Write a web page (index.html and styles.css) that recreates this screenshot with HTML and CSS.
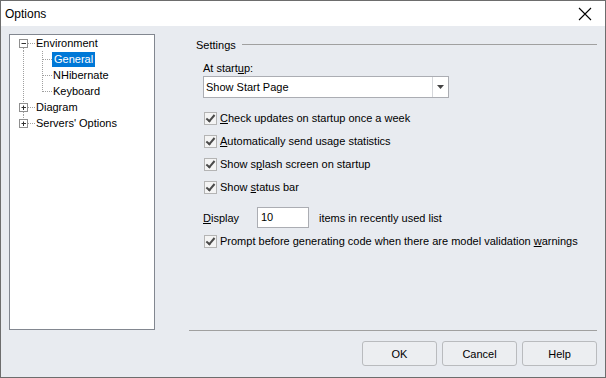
FILE: index.html
```html
<html>

<head>
    <meta charset="utf-8">
    <title>Options</title>
    <link rel="stylesheet" href="styles.css">
</head>

<body>
    <div class="window">
        <div class="title-bar">
            <span class="title">Options</span>
            <svg class="close" width="14" height="14" viewBox="0 0 14 14">
                <path d="M1 1L13 13M13 1L1 13" stroke="#000" stroke-width="1.1" fill="none" />
            </svg>
        </div>
        <div class="client">
            <div class="main-row">
                <div class="tree">
                    <div class="node">
                        <svg class="gutter" width="25" height="16">
                            <rect x="9.5" y="4.5" width="8" height="8" fill="#fff" stroke="#8f8f8f" />
                            <path d="M11.5 8.5H16" stroke="#333" />
                            <path d="M18 8.5H25M13.5 13V16" stroke="#a0a0a0" stroke-dasharray="1 1" />
                        </svg>
                        <span class="label">Environment</span>
                    </div>
                    <div class="node">
                        <svg class="gutter" width="42" height="16">
                            <path d="M13.5 0V16M32.5 0V16M33 8.5H42" stroke="#a0a0a0" stroke-dasharray="1 1" />
                        </svg>
                        <span class="label selected">General</span>
                    </div>
                    <div class="node">
                        <svg class="gutter" width="42" height="16">
                            <path d="M13.5 0V16M32.5 0V16M33 8.5H42" stroke="#a0a0a0" stroke-dasharray="1 1" />
                        </svg>
                        <span class="label">NHibernate</span>
                    </div>
                    <div class="node">
                        <svg class="gutter" width="42" height="16">
                            <path d="M13.5 0V16M32.5 0V9M33 8.5H42" stroke="#a0a0a0" stroke-dasharray="1 1" />
                        </svg>
                        <span class="label">Keyboard</span>
                    </div>
                    <div class="node">
                        <svg class="gutter" width="25" height="16">
                            <rect x="9.5" y="4.5" width="8" height="8" fill="#fff" stroke="#8f8f8f" />
                            <path d="M11.5 8.5H16M13.5 6.5V11" stroke="#333" />
                            <path d="M18 8.5H25M13.5 0V4M13.5 13V16" stroke="#a0a0a0" stroke-dasharray="1 1" />
                        </svg>
                        <span class="label">Diagram</span>
                    </div>
                    <div class="node">
                        <svg class="gutter" width="25" height="16">
                            <rect x="9.5" y="4.5" width="8" height="8" fill="#fff" stroke="#8f8f8f" />
                            <path d="M11.5 8.5H16M13.5 6.5V11" stroke="#333" />
                            <path d="M18 8.5H25M13.5 0V4" stroke="#a0a0a0" stroke-dasharray="1 1" />
                        </svg>
                        <span class="label">Servers' Options</span>
                    </div>
                </div>

                <div class="settings">
                    <div class="group-header">
                        <span>Settings</span>
                        <div class="group-line"></div>
                    </div>
                    <div class="group-body">
                        <div class="field-label">At start<u>u</u>p:</div>
                        <div class="combo">
                            <span class="combo-text">Show Start Page</span>
                            <span class="combo-button">
                                <svg width="7" height="4" viewBox="0 0 7 4">
                                    <path d="M0 0H7L3.5 4Z" fill="#444" />
                                </svg>
                            </span>
                        </div>
                        <div class="check-list">
                            <div class="check-row"><span class="checkbox"></span><span><u>C</u>heck updates on startup once a week</span></div>
                            <div class="check-row"><span class="checkbox"></span><span><u>A</u>utomatically send usage statistics</span></div>
                            <div class="check-row"><span class="checkbox"></span><span>Show s<u>p</u>lash screen on startup</span></div>
                            <div class="check-row"><span class="checkbox"></span><span>Show <u>s</u>tatus bar</span></div>
                        </div>
                        <div class="display-row">
                            <span class="display-label"><u>D</u>isplay</span>
                            <span class="number-box">10</span>
                            <span>items in recently used list</span>
                        </div>
                        <div class="check-row"><span class="checkbox"></span><span>Prompt before generating code when there are model validation <u>w</u>arnings</span></div>
                    </div>
                </div>
            </div>
            <div class="buttons">
                <div class="button">OK</div>
                <div class="button">Cancel</div>
                <div class="button">Help</div>
            </div>
        </div>
    </div>
</body>

</html>
```

FILE: styles.css
```css
* {
    margin: 0;
    padding: 0;
    box-sizing: border-box;
}

body {
    width: 606px;
    height: 378px;
    font-family: "Liberation Sans", Arial, sans-serif;
    font-size: 11px;
    color: #000;
    overflow: hidden;
}

.window {
    width: 606px;
    height: 378px;
    border: 1px solid #6d6d6d;
    display: flex;
    flex-direction: column;
    background: #e8ebf0;
}

.title-bar {
    height: 25px;
    background: #fff;
    display: flex;
    align-items: center;
    justify-content: space-between;
    padding: 0 13px 0 4px;
}

.title {
    font-size: 12px;
}

.close {
    display: block;
}

.client {
    flex: 1;
    display: flex;
    flex-direction: column;
}

.main-row {
    display: flex;
    padding: 8px 8px 0 8px;
}

/* tree view */
.tree {
    width: 146px;
    height: 296px;
    background: #fff;
    border: 1px solid #828790;
}

.node {
    height: 16px;
    display: flex;
    align-items: center;
}

.gutter {
    display: block;
    flex-shrink: 0;
}

.label {
    line-height: 16px;
    padding: 0 1px;
}

.selected {
    background: #0078d7;
    color: #fff;
    padding: 0 2px;
    line-height: 15px;
    margin-top: 1px;
}

/* settings group */
.settings {
    flex: 1;
    margin-left: 34px;
    height: 297px;
    border-bottom: 1px solid #a0a0a0;
    display: flex;
    flex-direction: column;
}

.group-header {
    display: flex;
    align-items: center;
    height: 17px;
    margin-top: 2px;
    padding-left: 7px;
}

.group-line {
    flex: 1;
    height: 1px;
    background: #a0a0a0;
    margin-left: 6px;
}

.group-body {
    padding-left: 14px;
}

.field-label {
    margin-top: 7px;
    line-height: 16px;
}

.combo {
    width: 246px;
    height: 22px;
    background: #fff;
    border: 1px solid #abadb3;
    display: flex;
    align-items: center;
}

.combo-text {
    flex: 1;
    padding-left: 2px;
}

.combo-button {
    width: 16px;
    height: 20px;
    border-left: 1px solid #d5d7db;
    display: flex;
    align-items: center;
    justify-content: center;
}

.combo-button svg {
    display: block;
}

.check-list {
    margin-top: 12px;
    display: flex;
    flex-direction: column;
    gap: 7px;
}

.check-row {
    display: flex;
    align-items: center;
    height: 16px;
    padding-left: 1px;
}

.checkbox {
    width: 13px;
    height: 13px;
    border: 1px solid #b4b4b4;
    background: #f4f4f4;
    margin-right: 3px;
    position: relative;
    flex-shrink: 0;
}

.checkbox::after {
    content: "";
    position: absolute;
    left: 3px;
    top: 0px;
    width: 3px;
    height: 7px;
    border: solid #4a4a4a;
    border-width: 0 2px 2px 0;
    transform: rotate(40deg);
}

.display-row {
    display: flex;
    align-items: center;
    margin-top: 12px;
    height: 21px;
}

.display-label {
    width: 54px;
}

.number-box {
    width: 52px;
    height: 21px;
    background: #fff;
    border: 1px solid #abadb3;
    padding-left: 3px;
    line-height: 19px;
    margin-right: 10px;
}

.display-row + .check-row {
    margin-top: 5px;
}

/* dialog buttons */
.buttons {
    display: flex;
    justify-content: flex-end;
    gap: 5px;
    padding: 10px 8px 0 0;
}

.button {
    width: 75px;
    height: 25px;
    border: 1px solid #b9bbbe;
    border-radius: 3px;
    background: #eceef1;
    display: flex;
    align-items: center;
    justify-content: center;
}
```
